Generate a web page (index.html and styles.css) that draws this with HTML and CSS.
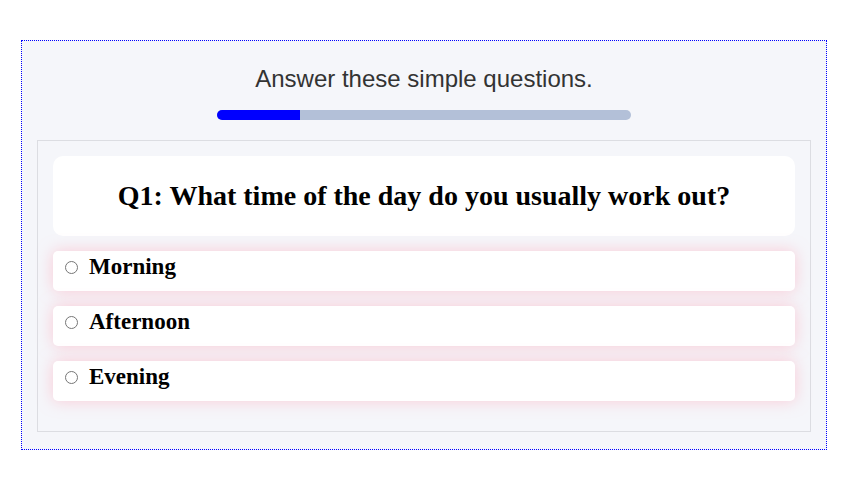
FILE: index.html
```html
<!DOCTYPE html>
<html>
<head>
<meta charset="utf-8">
<link rel="stylesheet" href="styles.css">
</head>
<body>
<div class="quiz">
  <div class="header">
    <div class="title">Answer these simple questions.</div>
    <div class="progress"><div class="progress-fill" style="width:20%"></div></div>
  </div>
  <div class="panel">
    <div class="question">Q1: What time of the day do you usually work out?</div>
    <label class="option"><input type="radio" name="q1"><span>Morning</span></label>
    <label class="option"><input type="radio" name="q1"><span>Afternoon</span></label>
    <label class="option"><input type="radio" name="q1"><span>Evening</span></label>
  </div>
</div>
</body>
</html>
```
FILE: styles.css
```css
html, body { margin: 0; padding: 0; background: #fff; }
.quiz {
  width: 806px;
  box-sizing: border-box;
  margin: 40px 0 0 21px;
  border: 1px dotted #0000ff;
  background: #f5f6fa;
  padding: 0 15px 17px;
}
.header {
  padding-top: 24px;
  display: flex;
  flex-direction: column;
  align-items: center;
}
.title {
  font-family: "Liberation Sans", Arial, sans-serif;
  font-size: 24px;
  line-height: 28px;
  color: #333;
}
.progress {
  margin: 17px 0 20px;
  width: 414px;
  height: 10px;
  border-radius: 5px;
  background: #b3c0d8;
  overflow: hidden;
}
.progress-fill { height: 100%; background: #0000ff; }
.panel {
  border: 1px solid #dcdde2;
  padding: 15px;
  display: flex;
  flex-direction: column;
  gap: 15px;
  padding-bottom: 30px;
}
.question {
  background: #fff;
  border-radius: 10px;
  height: 80px;
  display: flex;
  align-items: center;
  justify-content: center;
  font-family: "Liberation Serif", "Times New Roman", serif;
  font-weight: bold;
  font-size: 28px;
  color: #000;
}
.option {
  background: #fff;
  border-radius: 5px;
  height: 40px;
  box-sizing: border-box;
  display: flex;
  align-items: center;
  padding: 0 0 8px 7px;
  box-shadow: 0 0 15px rgba(255, 160, 180, 0.5);
  font-family: "Liberation Serif", "Times New Roman", serif;
  font-weight: bold;
  font-size: 23px;
  color: #000;
}
.option input { margin: 0 11px 0 5px; width: 13px; height: 13px; }
```
